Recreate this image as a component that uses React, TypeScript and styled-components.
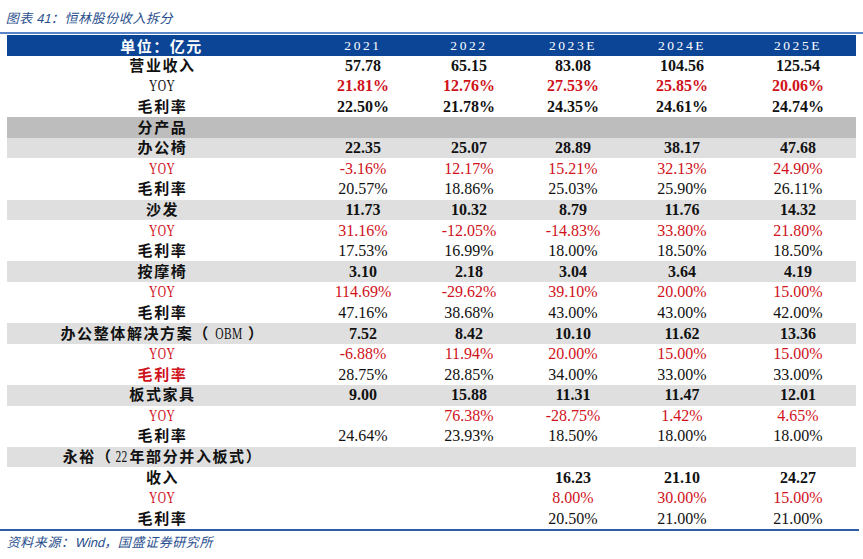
import styled, { createGlobalStyle } from "styled-components";

const GlobalStyle = createGlobalStyle`
  html, body {
    margin: 0;
    padding: 0;
    background: #fff;
  }
  body {
    font-family: "Liberation Serif", "Noto Sans CJK SC", serif;
  }
`;

const COLUMNS = "303px 106px 106px 102px 116px 116px";
const RED = "#d0121b";

const Page = styled.div`
  width: 863px;
  height: 559px;
  display: flex;
  flex-direction: column;
  background: #fff;
`;

const Title = styled.div`
  height: 32px;
  padding: 2px 0 0 7px;
  box-sizing: border-box;
  display: flex;
  align-items: center;
`;

// the CJK font has no italic face, so lean the caption by hand
const Slant = styled.span<{ $size: number }>`
  display: inline-block;
  transform: skewX(-14deg);
  font-family: "Noto Sans CJK SC", sans-serif;
  font-size: ${({ $size }) => $size}px;
  letter-spacing: 0.6px;
  color: #2a4f8e;
`;

const Latin = styled.span`
  font-family: "Liberation Sans", sans-serif;
  letter-spacing: 0;
`;

const TopRule = styled.div`
  height: 1.5px;
  background: #5a84c8;
  margin-bottom: 1px;
`;

const Table = styled.div`
  margin-left: 7px;
  width: 849px;
  display: flex;
  flex-direction: column;
`;

const HeaderRow = styled.div`
  display: grid;
  grid-template-columns: ${COLUMNS};
  height: 21px;
  background: #0c4596;
  color: #fff;
  align-items: center;
`;

const HeadLabel = styled.div`
  text-align: center;
  font-family: "Noto Sans CJK SC", sans-serif;
  font-size: 15px;
  font-weight: 700;
  letter-spacing: 1.5px;
  line-height: 21px;
  padding-left: 6px;
`;

const HeadYear = styled.div`
  text-align: center;
  font-family: "Liberation Serif", serif;
  font-size: 13.5px;
  letter-spacing: 2.6px;
  line-height: 21px;
`;

type Shade = "white" | "light" | "dark";

const shades: Record<Shade, string> = {
  white: "#fff",
  light: "#dfdfdf",
  dark: "#bdbdbd",
};

const Row = styled.div<{ $shade: Shade }>`
  display: grid;
  grid-template-columns: ${COLUMNS};
  height: 20.6px;
  align-items: center;
  background: ${({ $shade }) => shades[$shade]};
`;

const Label = styled.div<{ $red?: boolean }>`
  text-align: center;
  font-family: "Liberation Serif", "Noto Sans CJK SC", serif;
  font-size: 15px;
  font-weight: 700;
  letter-spacing: 1.6px;
  line-height: 20px;
  padding-left: 8px;
  white-space: nowrap;
  color: ${({ $red }) => ($red ? RED : "#111")};
`;

const Narrow = styled.span<{ $red?: boolean }>`
  display: inline-block;
  font-family: "Liberation Serif", serif;
  font-weight: 400;
  font-size: 16px;
  letter-spacing: 0.5px;
  transform: scaleX(0.72);
  color: ${({ $red }) => ($red ? RED : "inherit")};
`;

const Value = styled.div<{ $bold?: boolean; $red?: boolean }>`
  text-align: center;
  font-family: "Liberation Serif", serif;
  font-size: 16px;
  font-weight: ${({ $bold }) => ($bold ? 700 : 400)};
  line-height: 20px;
  color: ${({ $red }) => ($red ? RED : "#111")};
`;

const BottomRule = styled.div`
  width: 859px;
  height: 2px;
  background: #2f5ea9;
`;

const Source = styled.div`
  padding: 1px 0 0 8px;
`;

type Line = {
  label: React.ReactNode;
  shade: Shade;
  values?: string[];
  bold?: boolean;
  red?: boolean;
  labelRed?: boolean;
};

const yoy = (red: boolean) => <Narrow $red={red}>YOY</Narrow>;

const lines: Line[] = [
  { label: "营业收入", shade: "white", bold: true, values: ["57.78", "65.15", "83.08", "104.56", "125.54"] },
  { label: yoy(false), shade: "white", bold: true, red: true, values: ["21.81%", "12.76%", "27.53%", "25.85%", "20.06%"] },
  { label: "毛利率", shade: "white", bold: true, values: ["22.50%", "21.78%", "24.35%", "24.61%", "24.74%"] },
  { label: "分产品", shade: "dark" },
  { label: "办公椅", shade: "light", bold: true, values: ["22.35", "25.07", "28.89", "38.17", "47.68"] },
  { label: yoy(true), shade: "white", red: true, values: ["-3.16%", "12.17%", "15.21%", "32.13%", "24.90%"] },
  { label: "毛利率", shade: "white", values: ["20.57%", "18.86%", "25.03%", "25.90%", "26.11%"] },
  { label: "沙发", shade: "light", bold: true, values: ["11.73", "10.32", "8.79", "11.76", "14.32"] },
  { label: yoy(true), shade: "white", red: true, values: ["31.16%", "-12.05%", "-14.83%", "33.80%", "21.80%"] },
  { label: "毛利率", shade: "white", values: ["17.53%", "16.99%", "18.00%", "18.50%", "18.50%"] },
  { label: "按摩椅", shade: "light", bold: true, values: ["3.10", "2.18", "3.04", "3.64", "4.19"] },
  { label: yoy(true), shade: "white", red: true, values: ["114.69%", "-29.62%", "39.10%", "20.00%", "15.00%"] },
  { label: "毛利率", shade: "white", values: ["47.16%", "38.68%", "43.00%", "43.00%", "42.00%"] },
  {
    label: (
      <>
        办公整体解决方案（<Narrow>OBM</Narrow>）
      </>
    ),
    shade: "light",
    bold: true,
    values: ["7.52", "8.42", "10.10", "11.62", "13.36"],
  },
  { label: yoy(true), shade: "white", red: true, values: ["-6.88%", "11.94%", "20.00%", "15.00%", "15.00%"] },
  { label: "毛利率", shade: "white", labelRed: true, values: ["28.75%", "28.85%", "34.00%", "33.00%", "33.00%"] },
  { label: "板式家具", shade: "light", bold: true, values: ["9.00", "15.88", "11.31", "11.47", "12.01"] },
  { label: yoy(true), shade: "white", red: true, values: ["", "76.38%", "-28.75%", "1.42%", "4.65%"] },
  { label: "毛利率", shade: "white", values: ["24.64%", "23.93%", "18.50%", "18.00%", "18.00%"] },
  {
    label: (
      <>
        永裕（<Narrow>22</Narrow>年部分并入板式）
      </>
    ),
    shade: "light",
  },
  { label: "收入", shade: "white", bold: true, values: ["", "", "16.23", "21.10", "24.27"] },
  { label: yoy(true), shade: "white", red: true, values: ["", "", "8.00%", "30.00%", "15.00%"] },
  { label: "毛利率", shade: "white", values: ["", "", "20.50%", "21.00%", "21.00%"] },
];

const years = ["2021", "2022", "2023E", "2024E", "2025E"];

export default function App() {
  return (
    <Page>
      <GlobalStyle />
      <Title>
        <Slant $size={13}>
          图表 <Latin>41</Latin>：恒林股份收入拆分
        </Slant>
      </Title>
      <TopRule />
      <Table>
        <HeaderRow>
          <HeadLabel>单位：亿元</HeadLabel>
          {years.map((y) => (
            <HeadYear key={y}>{y}</HeadYear>
          ))}
        </HeaderRow>
        {lines.map((line, i) => (
          <Row key={i} $shade={line.shade}>
            <Label $red={line.labelRed}>{line.label}</Label>
            {(line.values ?? ["", "", "", "", ""]).map((v, j) => (
              <Value key={j} $bold={line.bold} $red={line.red}>
                {v}
              </Value>
            ))}
          </Row>
        ))}
      </Table>
      <BottomRule />
      <Source>
        <Slant $size={13}>
          资料来源：<Latin>Wind</Latin>，国盛证券研究所
        </Slant>
      </Source>
    </Page>
  );
}
